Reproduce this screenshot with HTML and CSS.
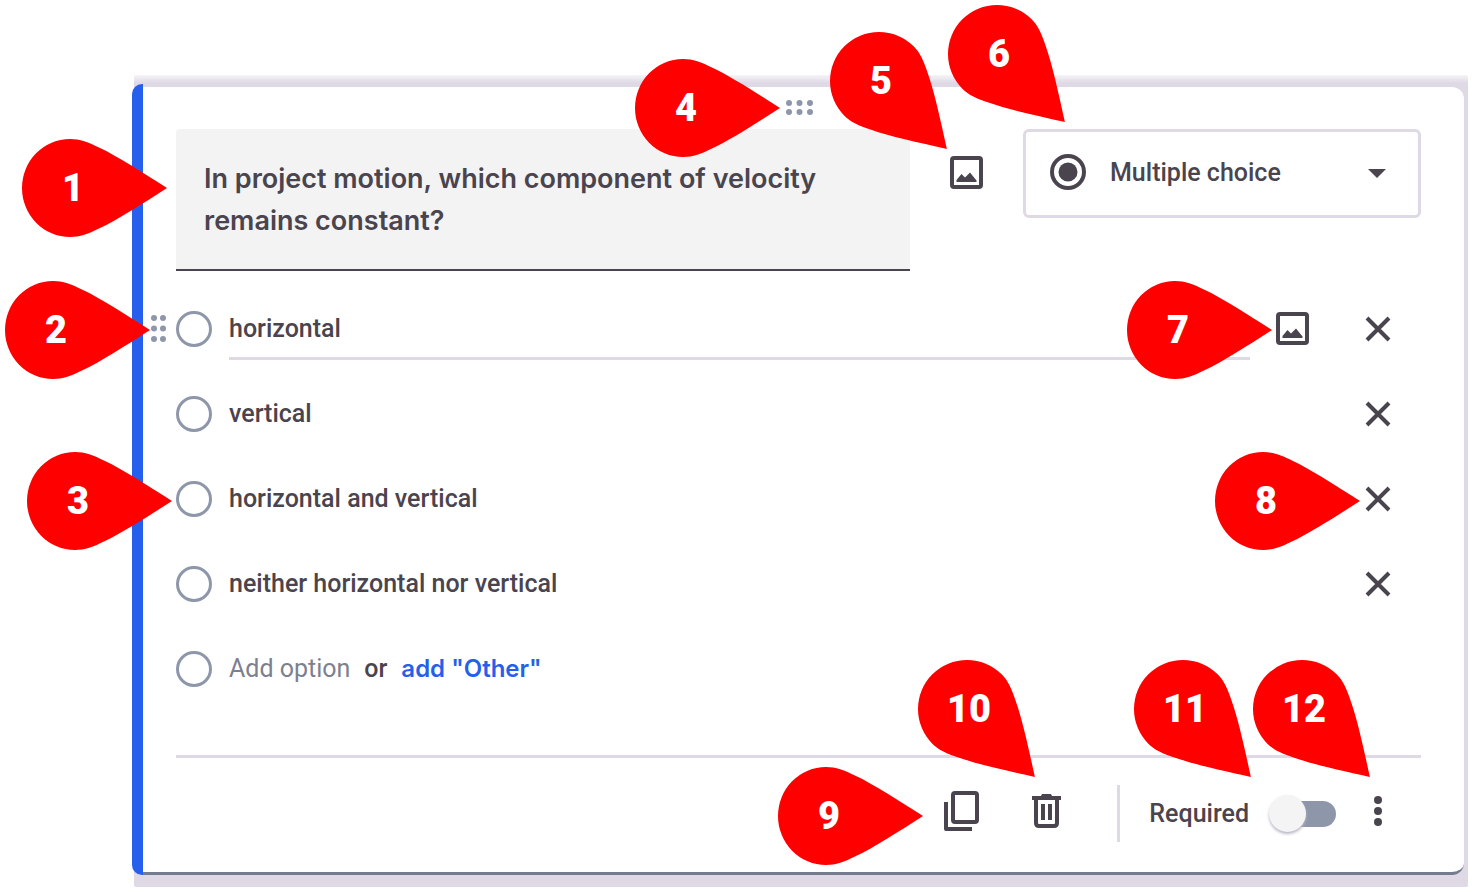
FILE: index.html
```html
<!DOCTYPE html>
<html lang="en">
<head>
<meta charset="utf-8">
<meta name="viewport" content="width=device-width, initial-scale=1">
<title>Question editor</title>
<link rel="stylesheet" href="styles.css">
</head>
<body>
<svg class="sprite" aria-hidden="true">
  <symbol id="image" viewBox="0 0 33 33"><rect x="2" y="2" width="29" height="29" rx="2" fill="none" stroke="currentColor" stroke-width="4"/><path d="M6.500 26v-2l5-6 3.500 3.500 5-5 6.500 8V26z" fill="currentColor"/></symbol>
  <symbol id="cross" viewBox="0 0 26 26"><path d="M2 2l22 22M24 2L2 24" fill="none" stroke="currentColor" stroke-width="4"/></symbol>
  <symbol id="drop" viewBox="0 0 145 98"><path d="M145 49C120 33 95 17 78 9 66 3 58 0 48 0A48 49 0 0 0 48 98C58 98 66 95 78 89 95 81 120 65 145 49Z"/></symbol>
  <symbol id="drop-diagonal" viewBox="0 0 117 117"><path transform="rotate(45 49 49)" d="M145 49C120 33 95 17 78 9 66 3 58 0 49 0A49 49 0 0 0 49 98C58 98 66 95 78 89 95 81 120 65 145 49Z"/></symbol>
</svg>
<main class="page">
  <div class="backdrop">
    <form class="card">
      <div class="stripe"></div>
      <div class="body">
        <div class="card-handle">
          <svg width="27" height="16" viewBox="0 0 27 16" fill="currentColor" aria-hidden="true"><circle cx="3" cy="3" r="3"/><circle cx="13.500" cy="3" r="3"/><circle cx="24" cy="3" r="3"/><circle cx="3" cy="12" r="3"/><circle cx="13.500" cy="12" r="3"/><circle cx="24" cy="12" r="3"/></svg>
        </div>
        <div class="question-row">
          <textarea class="question" aria-label="Question" rows="2">In project motion, which component of velocity remains constant?</textarea>
          <button class="icon-button question-image" type="button" aria-label="Add image"><svg width="33" height="33"><use href="#image"/></svg></button>
          <div class="type">
            <select class="type-select" aria-label="Question type"><option>Multiple choice</option></select>
            <svg class="type-radio" width="36" height="36" viewBox="0 0 36 36" aria-hidden="true"><circle cx="18" cy="18" r="16" fill="none" stroke="currentColor" stroke-width="4"/><circle cx="18" cy="18" r="9.500" fill="currentColor"/></svg>
            <svg class="type-arrow" width="18" height="9" viewBox="0 0 18 9" aria-hidden="true"><path d="M0 0h18L9 9z" fill="currentColor"/></svg>
          </div>
        </div>
        <div class="options">
          <div class="option">
            <span class="option-handle"><svg width="15" height="27" viewBox="0 0 15 27" fill="currentColor" aria-hidden="true"><circle cx="3" cy="3" r="3"/><circle cx="12" cy="3" r="3"/><circle cx="3" cy="13.500" r="3"/><circle cx="12" cy="13.500" r="3"/><circle cx="3" cy="24" r="3"/><circle cx="12" cy="24" r="3"/></svg></span>
            <input class="radio" type="radio" name="answer" aria-label="horizontal">
            <input class="option-text active" type="text" aria-label="Option 1" value="horizontal">
            <button class="icon-button" type="button" aria-label="Add image"><svg width="33" height="33"><use href="#image"/></svg></button>
            <button class="icon-button remove" type="button" aria-label="Remove"><svg width="26" height="26"><use href="#cross"/></svg></button>
          </div>
          <div class="option">
            <input class="radio" type="radio" name="answer" aria-label="vertical">
            <input class="option-text" type="text" aria-label="Option 2" value="vertical">
            <button class="icon-button remove" type="button" aria-label="Remove"><svg width="26" height="26"><use href="#cross"/></svg></button>
          </div>
          <div class="option">
            <input class="radio" type="radio" name="answer" aria-label="horizontal and vertical">
            <input class="option-text" type="text" aria-label="Option 3" value="horizontal and vertical">
            <button class="icon-button remove" type="button" aria-label="Remove"><svg width="26" height="26"><use href="#cross"/></svg></button>
          </div>
          <div class="option">
            <input class="radio" type="radio" name="answer" aria-label="neither horizontal nor vertical">
            <input class="option-text" type="text" aria-label="Option 4" value="neither horizontal nor vertical">
            <button class="icon-button remove" type="button" aria-label="Remove"><svg width="26" height="26"><use href="#cross"/></svg></button>
          </div>
          <div class="option">
            <input class="radio" type="radio" name="answer" aria-label="New option">
            <div class="add">
              <button class="add-option" type="button">Add option</button>
              <span>or</span>
              <button class="add-other" type="button">add "Other"</button>
            </div>
          </div>
        </div>
        <div class="footer">
          <button class="icon-button footer-button" type="button" aria-label="Duplicate"><svg width="35" height="40" viewBox="0 0 35 40" fill="none" stroke="currentColor" stroke-width="4" stroke-linejoin="round" aria-hidden="true"><rect x="9" y="2" width="24" height="29" rx="2"/><path d="M2 11v27h26"/></svg></button>
          <button class="icon-button footer-button" type="button" aria-label="Delete"><svg width="29" height="34" viewBox="0 0 29 34" aria-hidden="true"><path d="M0 2h9l1-2h9l1 2h9v4H0z" fill="currentColor"/><path d="M4 5v24q0 3 3 3h15q3 0 3-3V5" fill="none" stroke="currentColor" stroke-width="4"/><path d="M11 10v16M18 10v16" stroke="currentColor" stroke-width="4"/></svg></button>
          <div class="separator"></div>
          <label class="required" for="required">Required</label>
          <input class="switch" type="checkbox" role="switch" id="required">
          <button class="icon-button footer-button" type="button" aria-label="More options"><svg width="9" height="30" viewBox="0 0 9 30" fill="currentColor" aria-hidden="true"><circle cx="4" cy="4" r="4"/><circle cx="4" cy="15" r="4"/><circle cx="4" cy="26" r="4"/></svg></button>
        </div>
      </div>
    </form>
  </div>
  <div class="marker m1"><svg><use href="#drop"/></svg><span>1</span></div>
  <div class="marker m2"><svg><use href="#drop"/></svg><span>2</span></div>
  <div class="marker m3"><svg><use href="#drop"/></svg><span>3</span></div>
  <div class="marker m4"><svg><use href="#drop"/></svg><span>4</span></div>
  <div class="marker diagonal m5"><svg><use href="#drop-diagonal"/></svg><span>5</span></div>
  <div class="marker diagonal m6"><svg><use href="#drop-diagonal"/></svg><span>6</span></div>
  <div class="marker m7"><svg><use href="#drop"/></svg><span>7</span></div>
  <div class="marker m8"><svg><use href="#drop"/></svg><span>8</span></div>
  <div class="marker m9"><svg><use href="#drop"/></svg><span>9</span></div>
  <div class="marker diagonal m10"><svg><use href="#drop-diagonal"/></svg><span>10</span></div>
  <div class="marker diagonal m11"><svg><use href="#drop-diagonal"/></svg><span>11</span></div>
  <div class="marker diagonal m12"><svg><use href="#drop-diagonal"/></svg><span>12</span></div>
</main>
</body>
</html>
```
FILE: styles.css
```css
:root {
  --ink: #4a444e;
  --grey: #8e96a9;
  --line: #ded9e5;
  --blue: #265fec;
}
* { box-sizing: border-box; }
body {
  margin: 0;
  background: #fff;
  color: var(--ink);
  font: 500 25px/30px Roboto, sans-serif;
}
button, input, select, textarea { font: inherit; color: inherit; }
button { border: 0; padding: 0; background: none; cursor: pointer; }
svg { display: block; }
.sprite { position: absolute; width: 0; height: 0; }
.page { position: relative; padding: 75px 5px 5px 134px; }
.backdrop {
  padding: 9px 4px 12px 0;
  background: linear-gradient(#f6f4f8, var(--line) 8px);
  border-radius: 2px;
}
.card { display: flex; margin-left: -2px; }
.stripe {
  flex: none;
  width: 11px;
  background: var(--blue);
  border-radius: 10px 0 0 10px;
}
.body {
  flex: 1;
  min-width: 0;
  margin-top: 3px;
  background: #fff;
  border-bottom: 3px solid #747b8d;
  border-radius: 0 12px 12px 0;
}
.card-handle {
  display: flex;
  align-items: center;
  justify-content: center;
  height: 42px;
  padding: 0 42px 0 33px;
  color: var(--grey);
}
.question-row {
  display: grid;
  grid-template-columns: 1fr 33px 398px;
  gap: 40px;
  align-items: start;
  padding: 0 43px 0 33px;
}
.question {
  display: block;
  width: 100%;
  height: 142px;
  padding: 29px 28px 27px;
  border: 0;
  border-bottom: 2px solid var(--ink);
  border-radius: 4px 4px 0 0;
  background: #f3f3f3;
  font: 600 27px/42px Inter, sans-serif;
  resize: none;
  overflow: hidden;
}
.question-image { margin-top: 27px; }
.type { position: relative; }
.type-select {
  appearance: none;
  width: 100%;
  height: 89px;
  padding: 0 60px 2px 84px;
  border: 3px solid var(--line);
  border-radius: 6px;
  background: #fff;
}
.type-radio, .type-arrow { position: absolute; pointer-events: none; }
.type-radio { left: 27px; top: 25px; }
.type-arrow { right: 35px; top: 40px; }
.options { padding: 15px 43px 0 0; }
.option {
  display: grid;
  grid-template-columns: 33px 36px 1fr 85px 86px;
  align-items: center;
  height: 85px;
}
.option-handle { padding-left: 8px; color: var(--grey); }
.radio {
  grid-column: 2;
  appearance: none;
  width: 36px;
  height: 36px;
  margin: 0;
  border: 3px solid var(--grey);
  border-radius: 50%;
}
.option-text {
  grid-column: 3;
  height: 62px;
  margin-left: 17px;
  padding: 0;
  border: 0 solid transparent;
  border-width: 3px 0;
  background: none;
}
.option-text.active { border-bottom-color: var(--line); }
.icon-button { display: flex; align-items: center; justify-content: center; }
.option .icon-button { height: 60px; }
.option .remove { grid-column: 5; }
.add { grid-column: 3; display: flex; gap: 14px; margin-left: 17px; }
.add-option { color: #7d808e; font-weight: 400; }
.add-other { color: var(--blue); font: 600 24px/30px Inter, sans-serif; }
.footer {
  display: flex;
  align-items: center;
  justify-content: flex-end;
  margin: 44px 43px 0 33px;
  padding: 27px 0 30px;
  border-top: 3px solid var(--line);
}
.footer-button { width: 85px; height: 57px; padding-bottom: 6px; }
.separator { width: 3px; height: 57px; margin: 0 29px 0 28px; background: var(--line); }
.required { margin-right: 20px; }
.switch {
  appearance: none;
  position: relative;
  width: 67px;
  height: 26px;
  margin: 0;
  border-radius: 13px;
  background: linear-gradient(90deg, transparent 20px, var(--grey) 20px);
}
.switch::before {
  content: "";
  position: absolute;
  left: 0;
  top: -6px;
  width: 37px;
  height: 37px;
  border-radius: 50%;
  background: #f4f4f5;
  box-shadow: 0 2px 3px #b9b5c4;
}
.marker { position: absolute; width: 145px; height: 98px; }
.marker svg { width: 100%; height: 100%; fill: #f00; }
.marker span {
  position: absolute;
  left: 0;
  top: 0;
  width: 102px;
  color: #fff;
  font: 900 38px/98px Roboto, sans-serif;
  text-align: center;
}
.diagonal { width: 117px; height: 117px; }
.m1 { left: 22px; top: 139px; }
.m2 { left: 5px; top: 281px; }
.m3 { left: 27px; top: 452px; }
.m4 { left: 635px; top: 59px; }
.m5 { left: 830px; top: 32px; }
.m6 { left: 948px; top: 5px; }
.m7 { left: 1127px; top: 281px; }
.m8 { left: 1215px; top: 452px; }
.m9 { left: 778px; top: 767px; }
.m10 { left: 918px; top: 660px; }
.m11 { left: 1134px; top: 660px; }
.m12 { left: 1253px; top: 660px; }
```
